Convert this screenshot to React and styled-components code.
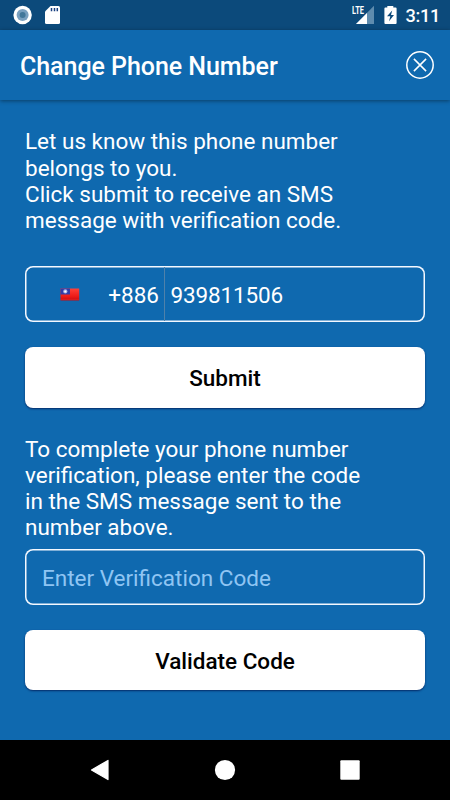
import React from "react";
import styled, { createGlobalStyle } from "styled-components";

const GlobalStyle = createGlobalStyle`
  * { box-sizing: border-box; }
  body { margin: 0; background: #0f69af; }
`;

const Screen = styled.div`
  width: 450px;
  height: 800px;
  display: flex;
  flex-direction: column;
  overflow: hidden;
  background: #0f69af;
  color: #fff;
  font-family: Roboto, sans-serif;
  font-size: 22.5px;
`;

const StatusBar = styled.div`
  height: 30px;
  flex: none;
  display: flex;
  align-items: center;
  justify-content: space-between;
  padding: 0 10px 0 12px;
  background: #0c4a7b;
`;

const StatusGroup = styled.div`
  display: flex;
  align-items: center;
`;

const Clock = styled.span`
  margin-left: 8px;
  font-size: 18.2px;
  font-weight: 500;
  line-height: 30px;
  letter-spacing: -0.3px;
  padding-top: 1px;
`;

const Icon = styled.svg`
  display: block;
  flex: none;
  margin-left: ${(p) => p.$gap || 0}px;
`;

const Header = styled.header`
  height: 70px;
  flex: none;
  display: flex;
  align-items: center;
  justify-content: space-between;
  padding: 0 15px 0 20px;
  box-shadow: 0 1px 4px rgba(0, 0, 0, 0.42);
`;

const Title = styled.h1`
  margin: 4px 0 0;
  font-size: 25px;
  font-weight: 500;
  line-height: 30px;
  letter-spacing: -0.05px;
`;

const IconButton = styled.button`
  padding: 0;
  border: 0;
  background: none;
  color: inherit;
`;

const Content = styled.main`
  flex: 1;
  display: flex;
  flex-direction: column;
  padding: 28.3px 25px 0;
`;

const Message = styled.p`
  height: 104.8px;
  flex: none;
  margin: ${(p) => p.$top || 0}px 0 0;
  line-height: 26.2px;
  white-space: nowrap;
`;

const Field = styled.div`
  height: 56px;
  flex: none;
  display: flex;
  align-items: center;
  margin-top: ${(p) => p.$top}px;
  padding: 1px;
  border-radius: 8px;
  box-shadow: inset 0 0 0 1.5px #f4f8ff;
`;

const CountryCode = styled.div`
  width: 139px;
  height: 100%;
  display: flex;
  align-items: center;
  justify-content: space-between;
  padding: 1.5px 5px 0 34px;
  border-right: 1px solid #4f81aa;
`;

const Input = styled.input`
  flex: 1;
  min-width: 0;
  height: 100%;
  padding: 2px 0 0 ${(p) => p.$inset}px;
  border: 0;
  outline: 0;
  background: none;
  color: #fff;
  font: inherit;
  letter-spacing: ${(p) => p.$tracking || 0}px;
  &::placeholder { color: #8fc5f3; opacity: 1; }
`;

const Button = styled.button`
  height: 60.5px;
  flex: none;
  margin-top: ${(p) => p.$top}px;
  padding: 1px 0 0;
  border: 0;
  border-radius: 8px;
  background: #fff;
  color: #000;
  font: inherit;
  font-weight: 500;
  box-shadow: 0 1px 2px rgba(0, 22, 80, 0.75);
`;

const NavBar = styled.nav`
  height: 60px;
  flex: none;
  display: flex;
  align-items: center;
  justify-content: space-between;
  padding: 0 88px;
  background: #000;
`;

function Flag() {
  return (
    <Icon width="20" height="14" viewBox="0 0 20 14">
      <defs>
        <linearGradient id="red" x2="0" y2="1">
          <stop stopColor="#ff4139" />
          <stop offset=".65" stopColor="#ed1c18" />
          <stop offset="1" stopColor="#c90b12" />
        </linearGradient>
      </defs>
      <path d="M.5 .5h18.7v12H.5z" fill="url(#red)" />
      <path d="M.5 .5H10v6H.5z" fill="#303eaa" />
      <circle cx="5.3" cy="3.4" r="2.1" fill="#a9b5e8" />
      <circle cx="5.3" cy="3.4" r="1" fill="#fff" />
      <path d="M.5 11h18.7v.5H.5z" fill="#ff5d50" opacity=".35" />
    </Icon>
  );
}

export default function App() {
  return (
    <>
      <GlobalStyle />
      <Screen>
        <StatusBar>
          <StatusGroup>
            <Icon width="21" height="20" viewBox="0 0 21 20">
              <circle cx="10.6" cy="10" r="9.2" fill="#fff" />
              <circle cx="10.6" cy="10" r="6" fill="#79a0bf" />
              <circle cx="10.6" cy="10" r="3" fill="#427799" />
            </Icon>
            <Icon $gap={12} width="16" height="20" viewBox="0 0 16 20">
              <path d="M5.5 1h8q1.5 0 1.5 1.5v15q0 1.5-1.5 1.5h-12Q0 19 0 17.5V6.5z" fill="#fff" />
              <path d="M6.5 3v3.3M9.5 3v3.3M12.3 3v3.3" stroke="#173f80" strokeWidth="1.5" />
            </Icon>
          </StatusGroup>
          <StatusGroup>
            <Icon width="23" height="20" viewBox="0 0 23 20">
              <path d="M22 .8V19H4z" fill="#5f8cae" />
              <path d="M15 8v11H4z" fill="#fff" />
              <path d="M-1-1h13.7v10.2H-1z" fill="#0c4a7b" />
              <text x="0" y="9" textLength="12" lengthAdjust="spacingAndGlyphs" fill="#fff" fontSize="10.5" fontWeight="700">LTE</text>
            </Icon>
            <Icon $gap={9} width="13" height="20" viewBox="0 0 13 20">
              <path d="M3.3 1h6v1.6h2.3q1 0 1 1v14.4q0 1-1 1H1.4q-1 0-1-1V3.6q0-1 1-1h1.9z" fill="#fff" />
              <path d="M8.2 5.5L3 11.2h3.3L5 16.3l5-6.4H7z" fill="#0c4a7b" />
            </Icon>
            <Clock>3:11</Clock>
          </StatusGroup>
        </StatusBar>
        <Header>
          <Title>Change Phone Number</Title>
          <IconButton aria-label="Close">
            <Icon width="30" height="30" viewBox="0 0 30 30" fill="none" stroke="#fff">
              <circle cx="15" cy="15" r="13.2" strokeWidth="1.5" />
              <path d="M8.9 8.9l12.2 12.2M21.1 8.9L8.9 21.1" strokeWidth="1.5" />
            </Icon>
          </IconButton>
        </Header>
        <Content>
          <Message>
            Let us know this phone number<br />belongs to you.<br />
            Click submit to receive an SMS<br />message with verification code.
          </Message>
          <Field $top={33.2}>
            <CountryCode><Flag /><span>+886</span></CountryCode>
            <Input $inset={5.5} $tracking={-0.15} defaultValue="939811506" aria-label="Phone number" />
          </Field>
          <Button $top={25}>Submit</Button>
          <Message $top={28}>
            To complete your phone number<br />verification, please enter the code<br />
            in the SMS message sent to the<br />number above.
          </Message>
          <Field $top={8.7}>
            <Input $inset={16} placeholder="Enter Verification Code" aria-label="Verification code" />
          </Field>
          <Button $top={24.5}>Validate Code</Button>
        </Content>
        <NavBar>
          <Icon width="24" height="24" viewBox="0 0 24 24">
            <path d="M20 2.4v19.2L3.5 12z" fill="#fff" stroke="#fff" strokeWidth="1.2" strokeLinejoin="round" />
          </Icon>
          <Icon width="24" height="24" viewBox="0 0 24 24"><circle cx="12" cy="12" r="10.1" fill="#fff" /></Icon>
          <Icon width="24" height="24" viewBox="0 0 24 24"><rect x="2.3" y="2.3" width="19.4" height="19.4" rx="1" fill="#fff" /></Icon>
        </NavBar>
      </Screen>
    </>
  );
}
